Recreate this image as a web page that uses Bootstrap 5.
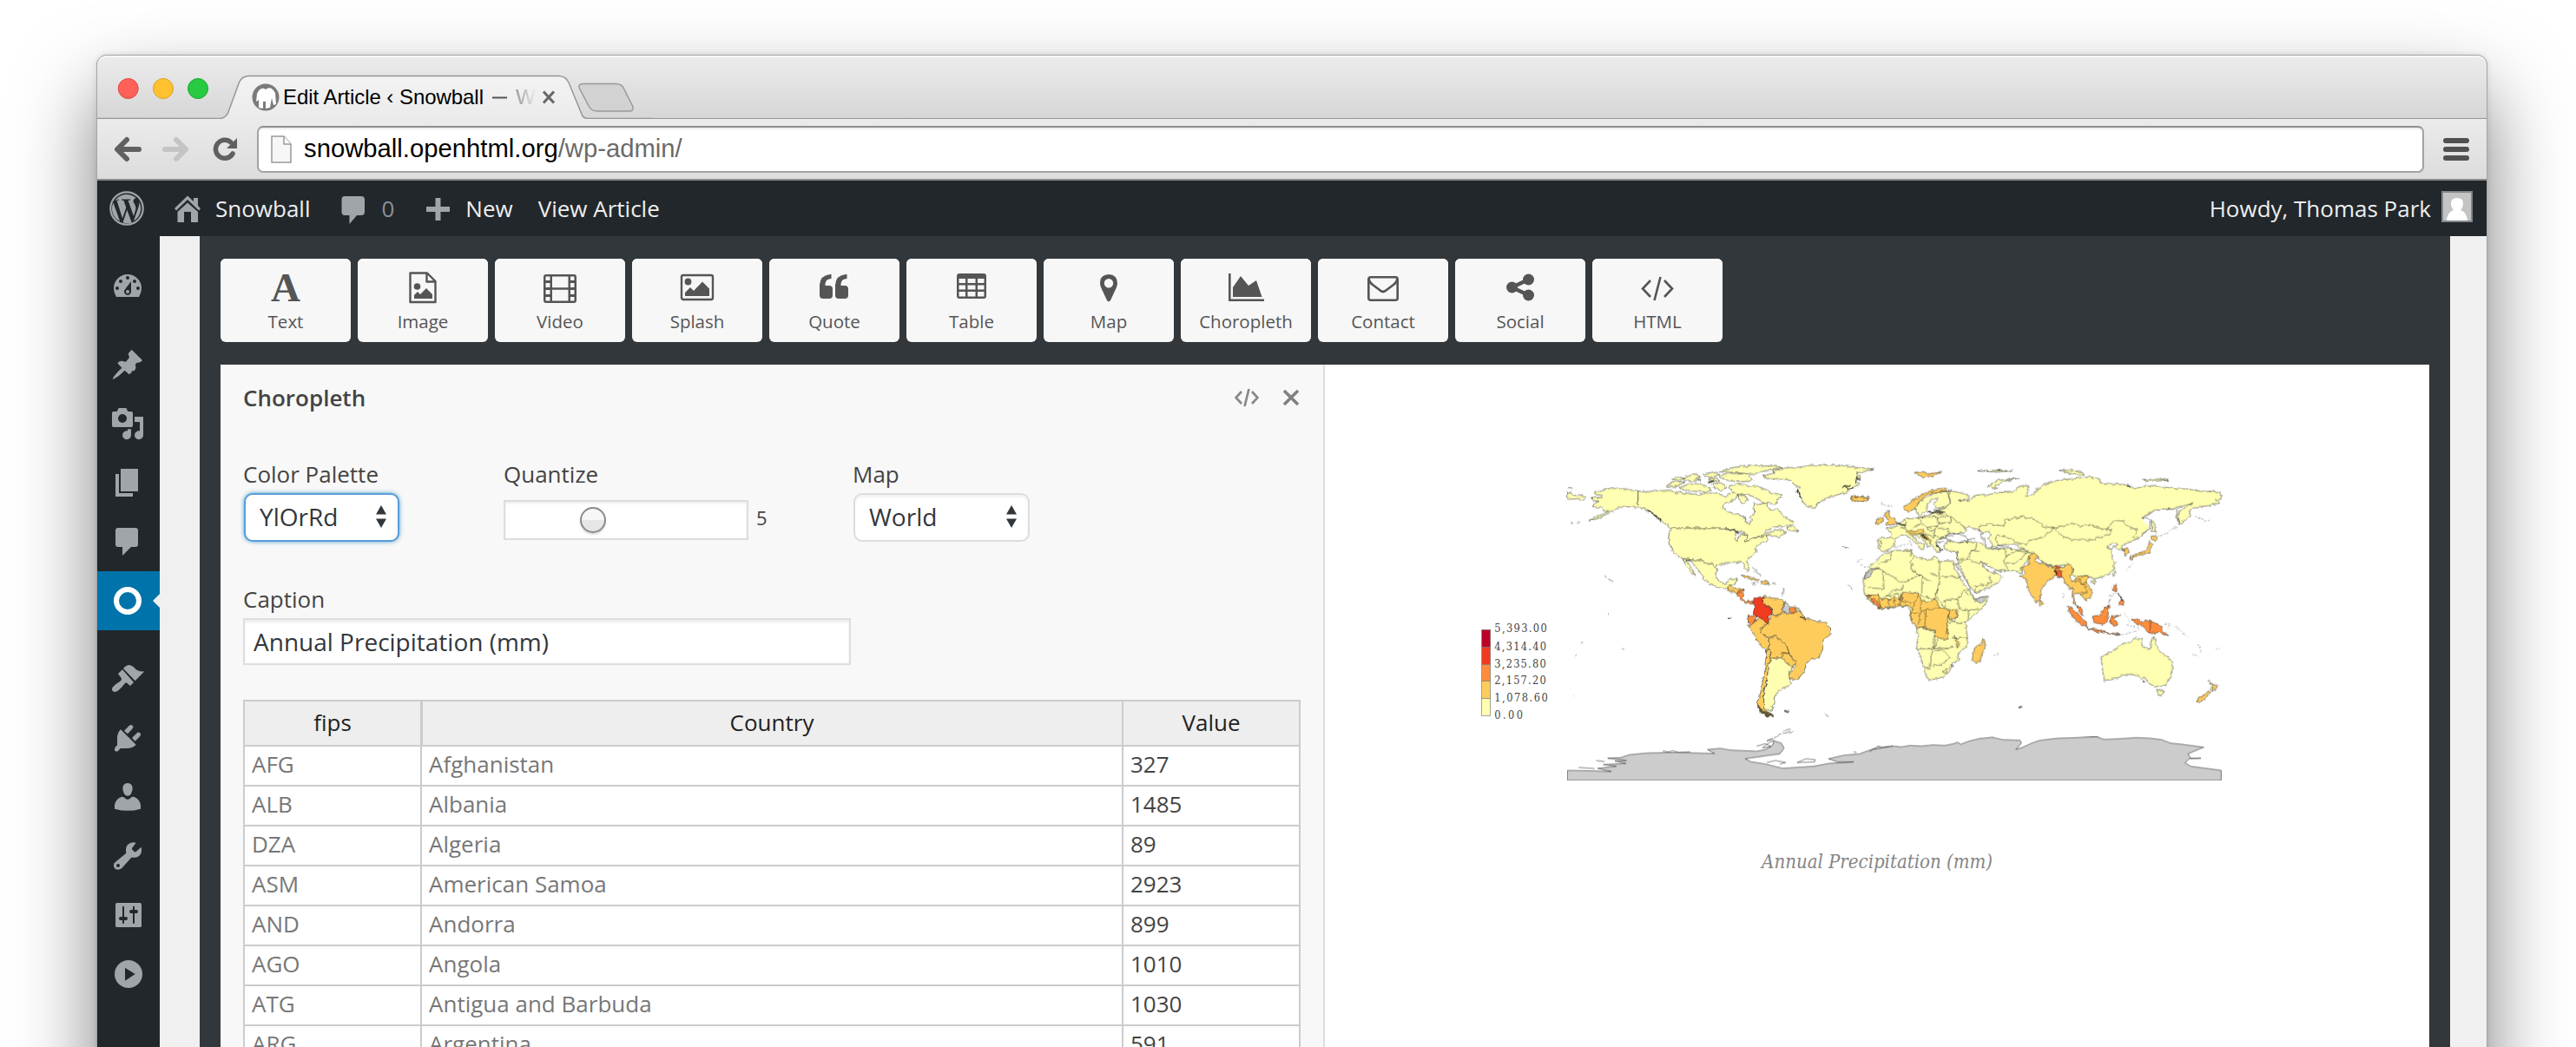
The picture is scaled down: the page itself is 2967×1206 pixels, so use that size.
<!DOCTYPE html>
<html lang="en">
<head>
<meta charset="utf-8">
<title>Edit Article ‹ Snowball</title>
<link href="https://cdn.jsdelivr.net/npm/bootstrap@5.3.0/dist/css/bootstrap.min.css" rel="stylesheet">
<style>
body{background:#fff;font-family:"Open Sans",sans-serif;font-size:26px;color:#444;height:1206px;overflow:hidden}
.win{width:2754px;height:1400px;margin:63px 0 0 111px;border:1px solid #a5a5a5;border-radius:12px 12px 0 0;box-shadow:0 44px 90px rgba(0,0,0,.5),0 0 6px rgba(0,0,0,.12);background:#22272b}
.chrome-font{font-family:"Liberation Sans",sans-serif}
.strip{height:73px;border-radius:11px 11px 0 0;background:linear-gradient(#ececec,#d6d6d6);box-shadow:inset 0 2px 0 #f6f6f6,inset 0 -1px 0 #969696}
.toolb{height:71px;padding:2px 20px 2px 20px;background:linear-gradient(#ebebeb,#dcdcdc);border-bottom:2px solid #8b8b8b}
.toolicons{margin-right:20px}
.urlbox{height:54px;border:2px solid #a3a3a3;border-top-color:#8f8f8f;border-radius:7px;background:#fff;font-size:29.25px;color:#000;padding-left:14px;box-shadow:inset 0 2px 2px rgba(0,0,0,.08)}
.urlbox i{font-style:normal;color:#6a6a6a}
.adminbar{height:64px;background:#22272b;color:#eee;padding-right:16px}
.adminbar svg,.side svg{fill:#a0a5aa;display:block}
.side{width:72px;padding-top:24px;background:#22272b}
.side svg{width:72px;height:68px}
.side .active{background:#0073aa}
.gap22{margin-top:22px}
.stage{background:#f0f0f0;padding:0 42px 0 46px}
.dark{background:#32373b;padding:26px 24px 0}
.tile{width:150px;height:96px;background:#f7f7f7;border-radius:6px;box-shadow:inset 0 2px 0 #fff;padding-top:11px;color:#555;font-size:20.500px;line-height:34px}
.tile svg{width:44px;height:44px;fill:#555}
.ed{width:1272px;background:#f8f8f8;border-right:2px solid #ddd;padding:0 26px}
.edhead{height:76px;font-weight:600}
.flabel{line-height:36px;height:36px}
.sel{height:56px;border:2px solid #ddd;border-radius:10px;background:#fff;color:#32373c;font-size:28px;padding:0 12px 3px 16px;box-shadow:inset 0 3px 3px rgba(0,0,0,.05);margin:4px 0 0 1px}
.sel.on{border-color:#5b9dd9;box-shadow:0 0 5px rgba(30,140,190,.8)}
.rng{width:282px;height:46px;background:#fff;border:2px solid #ddd;box-shadow:inset 0 2px 3px rgba(0,0,0,.07);padding-left:86px}
.knob{width:30px;height:30px;border-radius:50%;border:2px solid #8a8a8a;background:linear-gradient(#f6f6f6 50%,#e6e6e6 50%);box-shadow:0 2px 2px rgba(0,0,0,.15)}
.cap{width:700px;height:54px;border:2px solid #ddd;border-radius:0;font-size:28px;color:#32373c;padding:0 10px 0;margin-top:4px;box-shadow:inset 0 3px 3px rgba(0,0,0,.07)}
.grid{width:1218px;table-layout:fixed;border-collapse:separate;border-spacing:0;border-left:2px solid #ccc;border-top:2px solid #ccc;margin:40px 0 0}
.grid th{background:#eee;font-weight:400;color:#222;text-align:center;height:52px;line-height:48px;padding:0;border:0 solid #ccc;border-width:0 2px 2px 0;vertical-align:top}
.grid th:nth-child(2){box-shadow:inset 1px 0 0 #ccc}
.grid td{height:46px;line-height:40px;padding:0 8px;border:0 solid #ccc;border-width:0 2px 2px 0;background:#fff;color:#777;vertical-align:top}
.grid td:last-child{color:#444}
.preview{background:#fff;padding-top:100px}
.preview svg{width:1272px;height:400px;display:block}
.figcap{font-family:"DejaVu Serif Condensed","DejaVu Serif",serif;font-style:italic;font-size:22px;color:#858585;text-align:center;margin-top:56px}
.y{fill:#ffffb2}.o{fill:#fecc5c}.r{fill:#fd8d3c}.d{fill:#f03b20}.g{fill:#ccc}
.land{stroke:#222;stroke-opacity:.85;stroke-width:2;stroke-linejoin:round}
.coast{filter:url(#rough)}
.nofill{fill:none}
</style>
<script src="https://cdn.jsdelivr.net/npm/bootstrap@5.3.0/dist/js/bootstrap.bundle.min.js"></script>
</head>
<body>
<div class="win">
<div class="strip chrome-font">
<svg width="640" height="73" viewBox="112 64 640 73" style="display:block">
<defs>
<linearGradient id="tabg" x1="0" y1="0" x2="0" y2="1"><stop offset="0" stop-color="#f3f3f3"/><stop offset="1" stop-color="#ebebeb"/></linearGradient>
<linearGradient id="fade" gradientUnits="userSpaceOnUse" x1="590" x2="618" y1="0" y2="0"><stop offset="0" stop-color="#888"/><stop offset="1" stop-color="#eee"/></linearGradient>
</defs>
<circle cx="147.7" cy="102" r="11.5" fill="#ff6058" stroke="#e1483f"/><circle cx="188" cy="102" r="11.5" fill="#ffc130" stroke="#e0a023"/><circle cx="228" cy="102" r="11.5" fill="#27ca40" stroke="#17a92e"/>
<path d="M112 136.500H254Q260 136 263 129L275 96Q278 88 286 87.500H644Q652 88 655 95L669 129Q671 136.500 677 136.500L676 138H255Z" fill="url(#tabg)"/>
<path d="M112 136.500H254Q260 136 263 129L275 96Q278 88 286 87.500H644Q652 88 655 95L669 129Q671 136.500 677 136.500H752" fill="none" stroke="#969696" stroke-width="1.500"/>
<path d="M671 96.500H710Q717 97 719 103L729 123Q730 128 725 128H688Q681 128 678 122L667 101Q666 97 671 96.500Z" fill="#d2d2d2" stroke="#999" stroke-width="1.500"/>
<circle cx="306" cy="112" r="15.500" fill="#7a7a7a"/><path d="M296 108Q300 99 306 103Q312 98 317 107L318 120L315 121L313 113L311 124L306 125V117H303V125L298 124V115L295 117Z" fill="#fff"/>
<text x="326" y="120" font-size="24" textLength="231" fill="#000">Edit Article ‹ Snowball</text><rect x="567" y="111.500" width="17" height="2" fill="#555"/><text x="594" y="120" font-size="24" fill="url(#fade)">W</text>
<path d="M626 105.500L638 118.500M638 105.500L626 118.500" stroke="#666" stroke-width="3"/>
</svg>
</div>
<div class="toolb d-flex align-items-center chrome-font">
<svg width="144" height="30" viewBox="132 156 144 30" fill="none" class="toolicons flex-shrink-0">
<path d="M146 160L135 171L146 182M137 171H160" stroke="#606060" stroke-width="6" stroke-linecap="round" stroke-linejoin="round"/>
<path d="M203 160L214 171L203 182M212 171H190" stroke="#c4c4c4" stroke-width="6" stroke-linecap="round" stroke-linejoin="round"/>
<path d="M268 176A10.500 10.500 0 1 1 266 163" stroke="#606060" stroke-width="5.500" stroke-linecap="round"/><path d="M273 158V170H261Z" fill="#606060"/>
</svg>
<div class="urlbox d-flex align-items-center flex-grow-1">
<svg width="24" height="32" viewBox="0 0 24 32" style="margin-right:14px"><path d="M1 1H15L23 10V31H1Z" fill="#f7f7f7" stroke="#999" stroke-width="1.500"/><path d="M15 1V10H23" fill="#fff" stroke="#999" stroke-width="1.500"/></svg>
<span>snowball.openhtml.org<i>/wp-admin/</i></span>
</div>
<svg width="30" height="26" viewBox="0 0 30 26" fill="#505050" style="margin-left:22px"><rect width="30" height="6" rx="3"/><rect y="10" width="30" height="6" rx="3"/><rect y="20" width="30" height="6" rx="3"/></svg>
</div>
<div class="adminbar d-flex align-items-center">
<svg width="136" height="64" viewBox="112 208 136 64">
<circle cx="146" cy="240" r="18.700" fill="none" stroke="#a0a5aa" stroke-width="2.200"/>
<path d="M130.500 233.500L138.200 255A16 16 0 0 1 130.500 233.500ZM132.400 231A16.300 16.300 0 0 1 157 228.300C154 228.500 153 231 154 233.500C156 236.500 157 238.500 156 242L154 249L147.500 230.800H150V229.500H140V230.800H142.300L145.300 239L141 251.500L134.500 230.800H137V229.500ZM146.300 241.800L151.800 256.500A16.500 16.500 0 0 1 141.500 256.300ZM160.200 232.500A16.300 16.300 0 0 1 154 254.300L159.200 239.500C160.200 236.500 160.400 234 160.200 232.500Z"/>
<path d="M201 240L216 225.500L223 232V228H228V237L231 240L229 242.500L216 230L203 242.500ZM204.500 244L216 233.500L228 244V256H220V244H212V256H204.500Z"/>
</svg>
<span>Snowball</span>
<svg width="82" height="64" viewBox="357 208 82 64"><path d="M397 226H416Q420 226 420 230V244Q420 248 416 248H411L402.500 258V248H397Q393.500 248 393.500 244V230Q393.500 226 397 226Z"/></svg>
<span style="color:#8d9196">0</span>
<svg width="82" height="64" viewBox="455 208 82 64"><path d="M502.500 228H508.500V238H519V244H508.500V254H502.500V244H492V238H502.500Z"/></svg>
<span>New</span><span style="margin-left:29px">View Article</span>
<span class="ms-auto">Howdy, Thomas Park</span>
<svg width="36" height="36" viewBox="0 0 36 36" style="margin:0 0 4px 12px"><rect width="36" height="36" fill="#82878c"/><rect x="2" y="2" width="32" height="32" fill="#c4c4c4"/><path d="M6 34Q7 24 14 22Q11 19 11 14Q11 8 18 8Q25 8 25 14Q25 19 22 22Q29 24 30 34Z" fill="#fff"/></svg>
</div>
<div class="d-flex" style="height:1128px">
<nav class="side d-flex flex-column">
<svg viewBox="36 108 216 204"><path fill-rule="evenodd" d="M102 246Q93 232 93 216A48 48 0 0 1 189 216Q189 232 180 246Z"/><g fill="#22272b"><circle cx="105" cy="216" r="6"/><circle cx="117" cy="192" r="6"/><circle cx="141" cy="180" r="6"/><circle cx="165" cy="192" r="6"/><circle cx="177" cy="216" r="6"/><path d="M153 192L153 228A12 12 0 1 1 130 223Z"/></g><circle cx="141" cy="228" r="6"/></svg>
<svg class="gap22" viewBox="36 378 216 204"><path d="M155 428L192 465Q185 475 173 473L167 480Q173 490 164 502H154L156 506L146 514L131 500Q112 520 91 531Q88 528 95 519Q106 504 121 491L106 475Q112 465 125 468Q137 474 139 465L147 456L143 442Z"/></svg>
<svg viewBox="36 582 216 204"><path fill-rule="evenodd" d="M92 642H104L110 630H136L142 642H154Q159 642 159 647V691Q159 696 154 696H92Q87 696 87 691V647Q87 642 92 642ZM123 651A15 15 0 1 0 123 681A15 15 0 1 0 123 651Z"/><path d="M165 660H195V723A15 15 0 1 1 183 709V678H165ZM141 703H153V723A15 15 0 1 1 141 709Z"/></svg>
<svg viewBox="36 786 216 204"><path d="M117 840H177V918H117ZM99 858H111V924H159V936H99Z"/></svg>
<svg viewBox="36 990 216 204"><path d="M108 1044H168Q177 1044 177 1053V1101Q177 1110 168 1110H153L123 1140V1110H108Q99 1110 99 1101V1053Q99 1044 108 1044Z"/></svg>
<div class="active"><svg viewBox="36 1194 216 204"><circle cx="141" cy="1296" r="39" fill="none" stroke="#fff" stroke-width="18"/><path d="M252 1272V1320L228 1296Z" fill="#f0f0f0"/></svg></div>
<svg class="gap22" viewBox="36 54 216 204"><path d="M126 120Q136 108 147 108Q157 110 163 116Q175 132 199 130L167 163ZM123 124L162 168L150 180L143 174Q135 166 130 173Q118 188 109 196Q98 204 90 199Q84 194 90 184Q98 174 111 167Q123 160 119 153L108 138Z"/></svg>
<svg viewBox="36 258 216 204"><path d="M117 331L170 383Q158 396 138 396H116L109 404Q103 409 97 404Q94 398 98 392L105 385V360Q106 340 117 331ZM129 335L146 318Q152 312 158 317Q163 322 158 328L141 346ZM156 360L172 344Q178 338 184 343Q189 348 184 354L167 371Z"/></svg>
<svg viewBox="36 462 216 204"><path d="M141 516Q158 517 158 536Q155 559 141 560Q127 559 124 536Q124 517 141 516ZM121 563L128 565Q141 582 155 564L162 563Q183 570 186 592V605Q142 618 96 605V592Q99 570 121 563Z"/></svg>
<svg viewBox="36 666 216 204"><path fill-rule="evenodd" d="M170 722L156 741V745L165 754H169L188 737Q192 752 184 764Q173 776 154 773L121 810Q110 819 99 813Q89 804 95 792L136 758Q132 740 141 729Q153 717 170 722ZM108 795A6 6 0 1 0 108 807A6 6 0 1 0 108 795Z"/></svg>
<svg viewBox="36 870 216 204"><rect x="99" y="930" width="90" height="84" rx="5"/><g stroke="#22272b" stroke-linecap="round"><path d="M126 944V999M162 944V999" stroke-width="6"/><path d="M117 984H135M153 960H171" stroke-width="12"/></g></svg>
<svg viewBox="36 1074 216 204"><circle cx="144" cy="1176" r="48"/><path d="M132 1154L167 1176L132 1199Z" fill="#22272b"/></svg>
</nav>
<main class="stage flex-grow-1 d-flex">
<div class="dark flex-grow-1">
<div class="d-flex gap-2">
<div class="tile text-center d-flex flex-column align-items-center"><svg viewBox="0 0 44 44"><text x="22" y="38" font-family="Liberation Serif" font-weight="700" font-size="47" text-anchor="middle">A</text></svg><span>Text</span></div>
<div class="tile text-center d-flex flex-column align-items-center"><svg viewBox="0 0 44 44"><path d="M7.500 5.500H27L36.500 15V39H7.500ZM26.500 5V15.500H37" fill="none" stroke="#555" stroke-width="2.400" stroke-linejoin="round"/><circle cx="15.500" cy="21" r="3.800"/><path d="M12 35V31L16 27L19 30L26 23L33 30V35Z"/></svg><span>Image</span></div>
<div class="tile text-center d-flex flex-column align-items-center"><svg viewBox="0 0 44 44"><path fill-rule="evenodd" d="M6 7H38Q41 7 41 10V37Q41 40 38 40H6Q3 40 3 37V10Q3 7 6 7ZM13 9.500V22.300H31.500V9.500ZM13 24.700V37.500H31.500V24.700ZM5.500 9.500V14H10.500V9.500ZM5.500 17V22H10.500V17ZM5.500 25V30H10.500V25ZM5.500 33V37.500H10.500V33ZM34 9.500V14H38.500V9.500ZM34 17V22H38.500V17ZM34 25V30H38.500V25ZM34 33V37.500H38.500V33Z"/></svg><span>Video</span></div>
<div class="tile text-center d-flex flex-column align-items-center"><svg viewBox="0 0 44 44"><rect x="4" y="8" width="36" height="28" rx="2" fill="none" stroke="#555" stroke-width="2.400"/><circle cx="11.500" cy="15.500" r="3.900"/><path d="M8 32V28L14 22L18 26L28 15.500L36 23.500V32Z"/></svg><span>Splash</span></div>
<div class="tile text-center d-flex flex-column align-items-center"><svg viewBox="0 0 44 44"><path d="M17 7H18.500V12Q12 12 11.500 18V20H16Q20 20 20 24V31Q20 35 16 35H9Q5 35 5 31V19Q6 8 17 7Z"/><path d="M35 7H36.500V12Q30 12 29.500 18V20H34Q38 20 38 24V31Q38 35 34 35H27Q23 35 23 31V19Q24 8 35 7Z"/></svg><span>Quote</span></div>
<div class="tile text-center d-flex flex-column align-items-center"><svg viewBox="0 0 44 44"><path fill-rule="evenodd" d="M8 6H36Q39 6 39 9V32Q39 35 36 35H8Q5 35 5 32V9Q5 6 8 6ZM7.500 12V17H15V12ZM17.500 12V17H26.500V12ZM29 12V17H36.500V12ZM7.500 19.500V24.500H15V19.500ZM17.500 19.500V24.500H26.500V19.500ZM29 19.500V24.500H36.500V19.500ZM7.500 27V32.500H15V27ZM17.500 27V32.500H26.500V27ZM29 27V32.500H36.500V27Z"/></svg><span>Table</span></div>
<div class="tile text-center d-flex flex-column align-items-center"><svg viewBox="0 0 44 44"><path fill-rule="evenodd" d="M22 7Q32 7.500 32 17.500Q32 20 30.500 23L24 37Q22 39.500 20 37L13.500 23Q12 20 12 17.500Q12 7.500 22 7ZM22 12A5.200 5.200 0 1 0 22 22.400A5.200 5.200 0 1 0 22 12Z"/></svg><span>Map</span></div>
<div class="tile text-center d-flex flex-column align-items-center"><svg viewBox="0 0 44 44"><path d="M2 6H4.600V35.400H43V38H2ZM7 33V22L16 9L25 20L34 14L40.500 33Z"/></svg><span>Choropleth</span></div>
<div class="tile text-center d-flex flex-column align-items-center"><svg viewBox="0 0 44 44"><rect x="5.300" y="10.300" width="33.400" height="26.400" rx="2.500" fill="none" stroke="#555" stroke-width="2.600"/><path d="M5.500 12Q6 16 10 19L18 25Q22 29 26 25L34 19Q38 16 38.500 12" fill="none" stroke="#555" stroke-width="2.600"/></svg><span>Contact</span></div>
<div class="tile text-center d-flex flex-column align-items-center"><svg viewBox="0 0 44 44"><circle cx="12.500" cy="22" r="6.500"/><circle cx="31.500" cy="13" r="6.500"/><circle cx="31.500" cy="31" r="6.500"/><path d="M31.500 13L12.500 22L31.500 31" fill="none" stroke="#555" stroke-width="4.500"/></svg><span>Social</span></div>
<div class="tile text-center d-flex flex-column align-items-center"><svg viewBox="0 0 44 44"><path d="M14 14L5 23.500L14 33M30 14L39 23.500L30 33M25.500 10L18.500 37" fill="none" stroke="#555" stroke-width="2.600"/></svg><span>HTML</span></div>
</div>
<div class="d-flex" style="margin-top:26px;height:900px">
<section class="ed">
<div class="edhead d-flex align-items-center"><span class="me-auto">Choropleth</span>
<svg width="28" height="22" viewBox="0 0 28 22" fill="none" stroke="#888" stroke-width="2.700" style="margin-right:27px"><path d="M8 4L1.500 11L8 18M20 4L26.500 11L20 18M16.500 1L11.500 21"/></svg>
<svg width="20" height="20" viewBox="0 0 20 20" stroke="#808080" stroke-width="3.600" style="margin-right:1px"><path d="M2 2L18 18M18 2L2 18"/></svg></div>
<div class="d-flex" style="margin-top:32px">
<div style="width:300px"><div class="flabel">Color Palette</div><div class="sel on d-flex align-items-center justify-content-between" style="width:179px"><span>YlOrRd</span><svg width="14" height="26" viewBox="0 0 14 26" fill="#32373c"><path d="M7 0L13 10.500H1ZM7 26L13 15.500H1Z"/></svg></div></div>
<div style="width:402px"><div class="flabel">Quantize</div><div class="d-flex align-items-center" style="margin:12px 0 0"><div class="rng d-flex align-items-center"><div class="knob"></div></div><span style="font-size:22px;margin-left:9px;margin-top:-6px">5</span></div></div>
<div><div class="flabel">Map</div><div class="sel d-flex align-items-center justify-content-between" style="width:203px"><span>World</span><svg width="14" height="26" viewBox="0 0 14 26" fill="#32373c"><path d="M7 0L13 10.500H1ZM7 26L13 15.500H1Z"/></svg></div></div>
</div>
<div class="flabel" style="margin-top:48px">Caption</div>
<input class="form-control cap" value="Annual Precipitation (mm)">
<table class="grid">
<colgroup><col style="width:204px"><col style="width:808px"><col style="width:204px"></colgroup>
<thead><tr><th>fips</th><th>Country</th><th>Value</th></tr></thead>
<tbody>
<tr><td>AFG</td><td>Afghanistan</td><td>327</td></tr>
<tr><td>ALB</td><td>Albania</td><td>1485</td></tr>
<tr><td>DZA</td><td>Algeria</td><td>89</td></tr>
<tr><td>ASM</td><td>American Samoa</td><td>2923</td></tr>
<tr><td>AND</td><td>Andorra</td><td>899</td></tr>
<tr><td>AGO</td><td>Angola</td><td>1010</td></tr>
<tr><td>ATG</td><td>Antigua and Barbuda</td><td>1030</td></tr>
<tr><td>ARG</td><td>Argentina</td><td>591</td></tr>
</tbody></table>
</section>
<section class="preview">
<svg viewBox="-462 0 3816 1200">
<defs><filter id="rough" x="-2%" y="-2%" width="104%" height="104%" color-interpolation-filters="sRGB"><feTurbulence type="fractalNoise" baseFrequency=".07" numOctaves="2" seed="4" result="n"/><feDisplacementMap in="SourceGraphic" in2="n" scale="14" xChannelSelector="R" yChannelSelector="G"/></filter></defs>
<!-- legend -->
<g stroke="#777" stroke-width="2"><rect x="80" y="616" width="30" height="61" fill="#bd0026"/><rect x="80" y="677" width="30" height="59" class="d"/><rect x="80" y="736" width="30" height="57" class="r"/><rect x="80" y="793" width="30" height="60" class="o"/><rect x="80" y="853" width="30" height="60" class="y"/></g>
<g font-family="DejaVu Serif Condensed, DejaVu Serif" font-size="38" fill="#444"><text x="124" y="625" textLength="181">5,393.00</text><text x="124" y="687" textLength="179">4,314.40</text><text x="124" y="747" textLength="178">3,235.80</text><text x="124" y="805" textLength="178">2,157.20</text><text x="124" y="864" textLength="184">1,078.60</text><text x="124" y="924" textLength="98">0.00</text></g>
<g class="coast">
<!-- western hemisphere -->
<g class="land">
<path class="y" d="M376 141L390 145L400 152L418 150L438 158L430 168L412 163L395 165L376 163ZM376 124L390 126"/>
<path class="y" d="M620 137L580 130L527 126L500 132L482 140L466 144L480 150L497 152L492 160L470 157L453 162L468 170L483 172L468 180L463 190L480 196L492 192L500 204L520 206L500 216L470 228L447 240L480 232L510 218L535 205L550 196L570 190L600 192L620 194Z"/>
<path class="y" d="M620 137L650 141L680 133L705 137L735 136L760 142L800 145L828 150L860 143L880 145L900 147L920 155L935 150L950 140L970 150L955 165L940 172L920 180L912 195L930 208L960 218L985 222L990 240L1005 250L1012 238L1008 225L1022 215L1020 195L1022 180L1045 183L1060 178L1075 200L1090 205L1098 195L1120 220L1135 235L1155 240L1158 253L1125 258L1085 262L1065 275L1045 290L1065 283L1095 272L1120 270L1130 283L1105 295L1085 290L1068 287L1060 298L1030 296L1005 305L985 312L993 300L1000 290L975 278L950 272L930 268L905 265H738L725 258L700 240L680 225L655 205L640 196L620 194Z"/>
<path class="y" d="M738 265H905L930 270L960 275L955 300L963 310L970 290L985 285L998 290L990 311L1010 303L1040 296L1062 291L1068 302L1052 316L1030 325L1028 348L1010 365L995 376L1003 400L1000 413L990 405L982 384L955 382L935 384L920 386L893 393L890 408L872 388L860 390L838 374L815 377L775 370L758 362L740 342L727 320L725 300L728 278Z"/>
<path class="y" d="M775 370L815 377L838 374L860 390L872 388L893 410L890 430L900 450L915 457L932 453L940 440L962 438L955 458L943 462L934 470L925 475L900 470L870 458L845 440L842 428L820 400L797 373L785 375L800 395L812 415L818 428L805 420L790 400L780 382Z"/>
<path class="y" d="M736 94L760 88L780 94L765 100L745 98ZM780 90L810 80L838 86L820 92L840 98L800 102L780 98ZM845 78L880 72L900 80L885 86L870 90L850 86ZM860 96L890 92L902 102L880 105ZM718 120L740 105L780 105L765 115L740 125ZM765 125L800 110L830 112L855 120L875 132L850 140L815 138L780 135ZM875 112L905 108L925 120L910 135L885 128ZM900 85L940 75L1000 80L1015 95L1005 103L960 105L920 98ZM900 70L950 55L1010 50L1080 50L1120 55L1080 65L1040 70L1020 80L980 75L940 72ZM935 120L965 112L1000 118L1050 125L1080 145L1118 152L1105 165L1095 185L1080 178L1060 180L1035 165L1005 150L960 148L940 132ZM965 155L985 150L1000 168L980 180ZM1138 262L1150 258L1160 262L1173 275L1155 274L1138 272Z"/>
<path class="y" d="M1052 85L1090 75L1085 68L1120 58L1180 54L1220 48L1310 47L1370 55L1432 60L1400 70L1375 75L1388 85L1375 105L1385 112L1360 130L1338 142L1300 152L1270 162L1245 175L1232 196L1205 188L1190 175L1178 155L1170 135L1182 125L1160 115L1150 102L1120 94L1070 95Z"/>
<path class="o" d="M1355 158L1370 158L1390 155L1415 157L1420 164L1400 173L1370 172L1355 165Z"/>
<path class="o" d="M928 478L930 470L935 462H943L948 472L968 473L983 478L962 488L945 486L930 482ZM975 432L990 428L1010 435L1040 445L1032 450L1005 440ZM1045 450L1058 448L1075 458L1058 460L1045 457ZM1015 458L1026 460M1083 457H1094"/>
<path class="r" d="M960 488L983 478L985 500L980 507L990 518L1005 515L1018 518L1015 528L1005 522L990 524L970 508Z"/>
<path class="o" d="M1055 500L1075 505L1095 508L1120 510L1130 528L1115 545L1120 555L1095 568L1085 560L1080 540L1060 533L1048 512Z"/>
<path class="g" d="M1130 520L1145 538L1142 560L1130 560L1118 545Z"/><path class="r" d="M1147 538L1167 538L1166 558L1148 558ZM1000 568L1030 570L1028 585L1008 601L1000 590Z"/><path class="y" d="M1169 540L1180 548L1170 558Z"/>
<path class="o" d="M1120 557L1147 560L1166 558L1180 545L1190 570L1200 577L1235 585L1270 595L1286 607L1284 630L1260 655L1258 685L1245 712L1215 720L1200 735L1198 752L1172 790L1145 785L1142 768L1165 742L1150 710L1140 695L1135 672L1095 640L1060 640L1042 620L1048 605L1070 595L1080 562L1095 570Z"/>
<path class="o" d="M1042 575L1070 595L1048 605L1042 620L1060 640L1073 645L1072 680L1060 683L1035 662L1015 625L998 600L1008 601L1028 585Z"/>
<path class="o" d="M1073 645L1095 638L1135 672L1142 698L1118 695L1112 713L1080 716L1072 680ZM1118 695L1140 698L1165 730L1155 745L1140 740L1115 712Z"/>
<path class="d" d="M1018 515L1025 508L1055 498L1048 512L1060 533L1080 540L1083 562L1070 568L1070 597L1042 575L1018 565L1020 545Z"/>
<path class="o" d="M1064 683L1073 685L1080 716L1070 740L1067 780L1055 830L1055 870L1060 895L1092 915L1065 915L1040 895L1032 870L1043 835L1052 790L1062 740Z"/>
<path class="y" d="M1080 716L1112 713L1150 742L1140 770L1145 790L1150 805L1120 818L1105 830L1090 850L1093 870L1080 895L1055 890L1055 860L1055 830L1067 780L1070 740Z"/>
<path fill="#665c33" d="M1035 872L1045 893L1060 900L1078 903L1090 916L1065 913L1042 900L1034 885Z"/>
<path class="nofill" stroke-width="5" d="M650 205L672 215L688 228L700 240M1168 130L1182 160M1340 132L1365 125M1375 88L1388 100M1180 572L1200 582M1125 897H1142M930 574L943 577M865 108L880 100M925 268L950 274L970 282"/>
<path class="nofill" d="M388 245L398 247M408 245L418 246M503 433L508 436M517 438L530 447L531 453M420 658L430 661M516 560L520 561M566 682L569 684M397 847L400 848M1015 404L1030 415L1045 430M1120 470L1125 485L1118 498M1268 909L1280 915M1326 329L1346 335M405 705L407 706M1350 465L1360 476M1090 990L1120 975L1158 966M1120 965L1145 960"/>
</g>
<!-- eastern hemisphere -->
<g class="land" transform="translate(1320 0)">
<path class="y" d="M350 135L378 135L400 140L440 150L440 165L405 168L440 172L470 150L500 152L545 142L600 140L615 120L645 118L650 135L640 155L670 145L680 128L705 115L750 100L800 95L860 88L895 95L898 108L940 112L990 115L1020 126L1080 118L1140 125L1200 130L1240 137L1315 140L1315 165L1295 168L1310 178L1270 188L1225 192L1205 205L1208 225L1170 252L1162 225L1170 208L1190 195L1215 180L1185 188L1130 200L1080 205L1040 232L1070 235L1068 265L1040 290L1020 302L1005 310L985 320L970 330L978 345L955 335L945 325L925 330L938 345L935 365L950 385L940 410L925 425L900 435L875 440L858 430L845 428L820 440L800 425L805 405L780 390L740 398L700 385L670 355L640 342L600 320L580 320L545 325L520 330L500 290L480 270L430 260L380 250L340 235L320 215L340 200L360 196L380 175L372 150Z"/>
<path class="y" d="M160 265L195 258L225 232L250 232L300 222L340 200L430 262L435 275L425 282L372 283L362 300L340 300L330 315L345 350L330 345L315 325L300 330L290 310L262 290L245 290L262 310L290 322L285 340L270 325L245 305L230 290L205 292L190 300L188 320L170 340L148 345L130 335L130 300L170 298L175 285Z"/>
<path class="y" d="M262 190L285 165L320 145L345 140L370 138L378 180L360 193L330 195L320 180L335 165L325 162L300 178L298 200L285 215L270 222L260 205Z"/>
<path class="y" d="M357 318L380 310L430 312L465 312L500 325L525 335L570 335L625 338L665 350L650 370L625 402L625 420L600 412L545 412L520 405L500 385L485 388L505 410L550 425L560 435L540 455L500 475L465 490L450 470L430 435L405 385L402 345L375 345L357 335Z"/>
<path class="y" d="M150 352L190 342L245 342L255 362L290 372L310 375L325 365L345 378L385 378L400 392L420 440L440 470L455 498L470 510L507 500L505 520L480 550L445 580L430 590L438 640L440 665L405 700L408 720L385 735L378 755L355 780L305 790L290 760L275 705L262 680L268 640L262 605L242 580L243 555L235 540L205 532L180 540L135 543L100 515L80 485L80 438L105 395L125 372Z"/>
<path class="o" d="M85 495L130 497L140 510L170 510L188 503L205 515L212 487L270 490L278 515L310 520L325 508L345 540L378 545L400 548L405 570L385 585L370 570L370 650L355 648L325 640L325 618L295 615L290 607L262 608L243 582L243 558L248 542L238 535L225 535L205 530L180 540L135 543L115 515Z"/>
<path class="r" d="M85 495L105 497L100 505ZM103 512L115 508L128 520L138 540L118 530Z"/>
<path class="g" d="M80 438L100 435L112 410L130 405L118 402L100 412ZM455 498L470 512L507 500L490 522L462 515Z"/>
<path class="o" d="M495 648L500 665L482 725L470 733L457 722L462 680L480 668ZM393 635L402 650L410 665L403 680Z"/>
<path class="o" d="M652 360L668 350L680 362L675 380L730 400L765 403L780 388L800 395L805 410L795 430L800 450L825 430L855 430L850 455L870 485L868 500L848 515L835 505L828 490L805 492L808 520L825 540L805 525L800 500L802 470L788 475L765 430L738 432L715 450L692 480L690 510L675 520L650 480L640 440L620 432L640 420L622 402L650 390ZM686 513L698 525L690 535Z"/>
<path class="d" style="fill:#f45d2c" d="M738 410L762 412L764 435L752 432L742 430ZM742 397L762 398L760 405L742 405Z"/>
<path class="r" d="M783 538L800 542L835 575L850 590L850 608L830 600L800 570ZM817 535L832 542L838 568L822 552ZM870 570L895 565L910 545L928 530L925 560L920 590L905 598L875 590ZM850 610L880 615L920 625L970 632L940 632L880 622ZM935 570L965 565L945 575L958 600L945 605L932 590ZM1005 577L1025 578L1035 590L1055 582L1100 597L1115 620L1130 637L1100 625L1070 630L1040 600L1015 595ZM942 460L953 460L950 485L940 480ZM960 520L975 512L978 530L968 532ZM952 490L965 500"/>
<path class="y" d="M900 708L940 692L975 662L1000 662L1015 645L1045 650L1038 668L1060 685L1072 680L1075 645L1082 642L1092 670L1100 690L1140 720L1148 745L1142 775L1125 808L1090 812L1065 802L1050 780L1040 785L1020 772L990 770L945 785L912 792L905 760ZM1093 825L1115 828L1108 845L1098 842ZM940 420L948 412L948 425L943 432ZM870 445L880 445L878 457L868 453Z"/>
<path class="o" d="M1270 790L1280 803L1305 808L1292 828L1280 828L1283 812ZM1270 828L1278 832L1255 860L1235 867L1232 858L1250 845ZM1075 290L1097 298L1085 308L1072 302ZM1068 310L1076 318L1070 350L1040 357L1010 365L1012 357L1040 350L1058 340ZM1002 360L1010 372L1003 376ZM978 338L990 332L998 348L982 357Z"/>
<path class="o" d="M155 208L170 207L165 220L185 235L195 245L185 253L155 253L165 240L152 222ZM122 235L145 228L145 245L125 250ZM218 190L245 172L280 150L320 132L360 127L378 133L340 140L300 148L275 170L260 195L235 210L220 202ZM228 277L265 273L285 267L290 277L270 285L235 284ZM270 285L295 290L312 310L315 322L290 300ZM255 72L290 70L300 78L350 70L320 84L290 90L265 80ZM33 158L65 156L98 160L98 168L65 173L38 166Z"/>
<path class="y" d="M508 122L540 100L615 92L560 105L530 120L540 128ZM755 65L800 65L840 75L845 82L800 78ZM470 67L540 65L595 67L540 71ZM1040 97L1100 95L1130 100L1060 103ZM1075 235L1085 250L1088 282L1075 275Z"/>
<path fill="#fff" d="M368 308L365 292L400 284L425 290L445 308L410 316L385 310ZM482 285L515 278L520 290L508 300L525 320L520 338L500 332L495 305ZM488 382L512 398L540 408L525 420L500 408ZM920 330L945 315L955 322L935 335ZM388 388L402 395L430 440L448 470L440 480L415 440ZM384 575L400 575L395 588L384 586Z"/>
<path fill="#fff" stroke="none" d="M1040 232L1082 204L1162 199L1162 225L1155 262L1085 290L1068 265Z"/>
<path class="nofill" d="M1040 232L1082 204L1130 200L1160 199M1068 265L1070 235L1040 230M1162 199V225L1170 252M1068 265L1040 290"/>
<path class="y" d="M1075 235L1085 250L1088 282L1075 275Z"/>
<!-- borders -->
<path class="nofill" d="M480 275L478 260L510 250L565 258L570 238L625 225L670 235L700 258L735 265L720 280L690 300L650 308L640 322L610 315L570 295L545 290L535 300M735 265L750 262L800 248L830 258L860 252L905 268L938 270L930 285L870 305L800 305L760 290L735 265M915 275L945 238L975 240L1000 265L1028 270L1010 300M535 300L545 325L580 330L620 345L660 352M520 335L570 338L572 360L565 385L580 412M572 360L625 338M572 385L600 388L625 370L645 345M690 380L738 400M780 388L765 403M820 445L835 460L850 455M805 450L825 440L840 462L855 480L830 488M832 495L855 485"/>
<path class="nofill" d="M255 365L240 378L248 390L245 410L310 450M145 412L210 452L280 428L250 415M145 412L150 475L95 470M145 412L125 400M175 352L172 375L130 388M245 342L240 360M340 378L343 435L335 478L325 510L280 500L282 430M343 433H420M343 435L310 420M160 500L180 480L210 478L215 460M205 515L200 490L160 500L140 510M335 478L330 500L360 540M362 540L360 515L405 510L425 480L445 498M405 512L410 545L445 548L480 545M445 548L440 580M378 545L372 570M405 550L400 575M370 590L432 592M370 590L365 630M262 608L290 610L300 618L325 620L322 682L262 682M322 682L360 680L390 675M322 682L335 650M310 740L315 692L350 685L380 712L350 735L320 740M310 740L308 752L288 748M385 645L440 645M360 685L370 675M355 755L368 752L366 764L355 762ZM380 738L388 740L385 745"/>
<path class="nofill" d="M128 497L140 540M165 510L168 540M185 505L188 532M205 515L202 535M212 487L210 515L245 522M270 490L250 540M278 515L275 555L295 550L310 545L345 540M295 550L290 607M245 558L275 560L270 600M375 548L372 575L380 585"/>
<path class="nofill" d="M225 235L228 255L215 262L232 275M275 232L278 250L252 262M278 250L300 262L335 258L338 240L335 225L275 228M335 235L350 225L380 222L382 245L335 248M300 262L300 272L325 272L335 258M338 265L372 268L370 290M320 290L345 298L365 298M325 315L355 310M130 310L140 310L138 335M185 300L170 298M205 262L225 265M260 235L275 230M320 200L360 210M318 215L355 215M290 285L310 290L322 300L325 272M400 345L405 375L440 372L450 345L465 340L470 320M440 372L480 388L490 380M480 345L450 342M400 392L425 375M460 465L500 460L520 455L515 430M465 490L470 465M410 315L440 312M465 300L440 305M382 130L375 150M1070 588L1070 630"/>
<path class="nofill" stroke-width="5" d="M330 320L350 345M190 250L225 255M540 65L550 66M990 117L1000 119M955 490L970 510L975 515M1045 790L1050 797M740 408L745 430M615 880L628 884M280 285L300 305M60 85L50 110M5 125L35 115M300 208L355 210"/>
<path class="nofill" stroke-dasharray="5 6" d="M1098 297L1160 262M785 550L825 600M980 560L1000 590M1155 605L1200 640M1120 598L1140 600L1130 612M1235 665L1245 690M990 600L1030 610M5 330L30 335M70 395L105 398M985 410L1010 385M770 490L768 505M1225 225L1275 243M930 515L950 480M925 535L915 545M975 635L1030 615M1215 700L1235 712M1300 685L1312 677M185 332L240 318M25 463L42 478M60 380L75 370M920 545L935 490M140 182L180 190M530 705L548 700M240 310L242 330"/>
</g>
</g>
<!-- Antarctica -->
<path class="land g" d="M376 1102L470 1104L528 1106L480 1095L545 1088L500 1082L578 1078L540 1070L580 1068L515 1060L560 1058L590 1048L650 1042L760 1040L885 1044L870 1036L860 1030L905 1026L940 1032L1030 1036L1060 1030L1085 1015L1090 1000L1115 1008L1125 1025L1110 1045L1060 1052L990 1062L1010 1072L1060 1080L1120 1095L1225 1088L1280 1078L1365 1073L1310 1073L1278 1062L1330 1050L1385 1045L1440 1025L1450 1018L1462 1022L1500 1018L1530 1021L1560 1016L1600 1018L1640 1014L1680 1016L1710 1010L1725 1005L1735 1012L1760 1002L1800 992L1845 988L1880 996L1940 998L1945 1008L1925 1030L1950 1022L1980 1008L2010 998L2070 991L2140 989L2205 986L2230 995L2280 993L2340 989L2390 991L2430 996L2460 1008L2500 1012L2575 1022L2520 1045L2530 1060L2565 1060L2525 1062L2510 1076L2530 1088L2635 1102V1137H376Z"/>
<path class="land nofill" d="M415 1092L470 1096M475 1068L505 1072M1170 1075L1200 1062L1232 1065L1230 1073ZM1065 1075L1095 1068L1130 1075L1110 1080M705 1035L725 1038L740 1034L760 1040L800 1038M1030 1018L1060 1010L1080 1020L1050 1024L1075 1005L1090 1000M1085 990L1065 1000L1090 995M1420 1038L1430 1030L1500 1018M1365 1038L1375 1040"/>
</svg>
<div class="figcap">Annual Precipitation (mm)</div>
</section>
</div>
</div>
</main>
</div>
</div>
</body>
</html>
